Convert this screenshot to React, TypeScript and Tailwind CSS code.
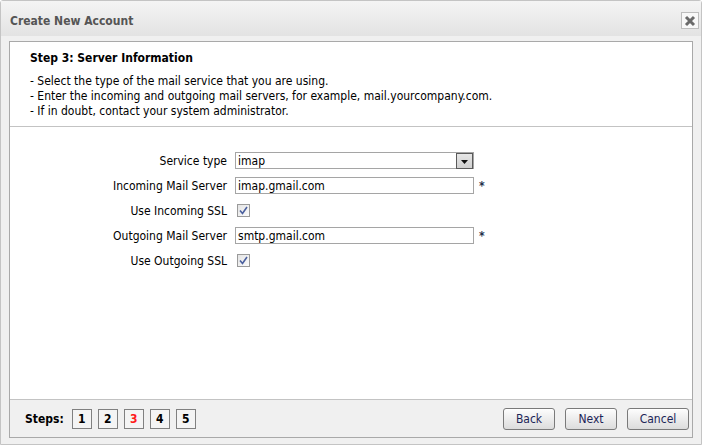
import React from 'react'

const steps = [1, 2, 3, 4, 5]

function Checkbox() {
  return (
    <div className="ml-[2px] flex h-[13px] w-[13px] items-center justify-center border border-[#9a9a9a] bg-gradient-to-br from-[#e4e4e4] to-[#fbfbfb]">
      <svg width="9" height="9" viewBox="0 0 9 9">
        <path d="M1 4.5 L3.5 7.5 L8 1" fill="none" stroke="#4a5f9e" strokeWidth="1.6" />
      </svg>
    </div>
  )
}

function TextField({ value }: { value: string }) {
  return (
    <div className="flex items-center gap-[5px]">
      <div className="flex h-[17px] w-[239px] items-center border border-[#a5a5a5] bg-white px-[2px] text-[12px] text-black">
        {value}
      </div>
      <span className="text-[12px] font-bold text-[#22304a]">*</span>
    </div>
  )
}

function Button({ label, width }: { label: string; width: string }) {
  return (
    <button
      type="button"
      className={`${width} h-[22px] rounded-[3px] border border-[#7a7a7a] bg-gradient-to-b from-[#fdfdfd] to-[#dcdcdc] text-[12px] text-[#1c2557] shadow-[inset_0_1px_0_#fff]`}
    >
      {label}
    </button>
  )
}

export default function App() {
  return (
    <div className="flex h-[445px] w-[702px] flex-col rounded-t-[3px] border border-[#c4c4c4] bg-[#f0f0f0] font-['DejaVu_Sans_Condensed','DejaVu_Sans',sans-serif] text-black">
      <div className="flex h-[35px] items-center justify-between bg-gradient-to-b from-[#f4f4f4] to-[#e3e3e3] pr-[2px] pl-[9px] pt-[4px]">
        <span className="text-[12px] font-bold text-[#555]">Create New Account</span>
        <div className="flex h-[17px] w-[18px] items-center justify-center border border-[#bdbdbd] bg-[#f8f8f8]">
          <svg width="12" height="12" viewBox="0 0 12 12">
            <path d="M2 2 L10 10 M10 2 L2 10" stroke="#6a6a6a" strokeWidth="3" />
          </svg>
        </div>
      </div>

      <div className="mx-[8px] mt-[5px] mb-[6px] flex flex-1 flex-col border border-[#a9a9a9]">
        <div className="border-b border-[#c3c3c3] bg-white px-[20px] pt-[9px] pb-[7px] text-[12px] leading-[15px]">
          <div className="font-bold">Step 3: Server Information</div>
          <div className="mt-[8px]">- Select the type of the mail service that you are using.</div>
          <div>- Enter the incoming and outgoing mail servers, for example, mail.yourcompany.com.</div>
          <div>- If in doubt, contact your system administrator.</div>
        </div>

        <div className="flex-1 bg-white pt-[21px]">
          <div className="grid grid-cols-[217px_1fr] gap-x-[8px] text-[12px]">
            <div className="flex h-[25px] items-center justify-end">Service type</div>
            <div className="flex h-[25px] items-center">
              <div className="flex h-[17px] w-[239px] items-center justify-between border border-[#a5a5a5] bg-white pl-[2px]">
                <span>imap</span>
                <div className="flex h-[16px] w-[17px] items-center justify-center border border-[#5a5a5a] bg-gradient-to-b from-[#e6e6e6] to-[#d0d0d0]">
                  <svg width="7" height="4" viewBox="0 0 7 4" className="mt-[3px]">
                    <path d="M0 0 H7 L3.5 4 Z" fill="#111" />
                  </svg>
                </div>
              </div>
            </div>

            <div className="flex h-[25px] items-center justify-end">Incoming Mail Server</div>
            <div className="flex h-[25px] items-center">
              <TextField value="imap.gmail.com" />
            </div>

            <div className="flex h-[25px] items-center justify-end">Use Incoming SSL</div>
            <div className="flex h-[25px] items-center">
              <Checkbox />
            </div>

            <div className="flex h-[25px] items-center justify-end">Outgoing Mail Server</div>
            <div className="flex h-[25px] items-center">
              <TextField value="smtp.gmail.com" />
            </div>

            <div className="flex h-[25px] items-center justify-end">Use Outgoing SSL</div>
            <div className="flex h-[25px] items-center">
              <Checkbox />
            </div>
          </div>
        </div>

        <div className="flex h-[38px] items-center justify-between border-t border-[#c3c3c3] bg-[#f0f0f0] pr-[3px] pl-[15px]">
          <div className="flex items-center">
            <span className="mr-[8px] text-[12px] font-bold">Steps:</span>
            <div className="flex gap-[6px]">
              {steps.map((n) => (
                <div
                  key={n}
                  className={`flex h-[20px] w-[20px] items-center justify-center border border-[#808080] bg-[#f4f4f4] text-[12px] font-bold ${
                    n === 3 ? 'text-[#ff1a1a]' : 'text-black'
                  }`}
                >
                  {n}
                </div>
              ))}
            </div>
          </div>
          <div className="flex gap-[10px]">
            <Button label="Back" width="w-[52px]" />
            <Button label="Next" width="w-[52px]" />
            <Button label="Cancel" width="w-[62px]" />
          </div>
        </div>
      </div>
    </div>
  )
}
